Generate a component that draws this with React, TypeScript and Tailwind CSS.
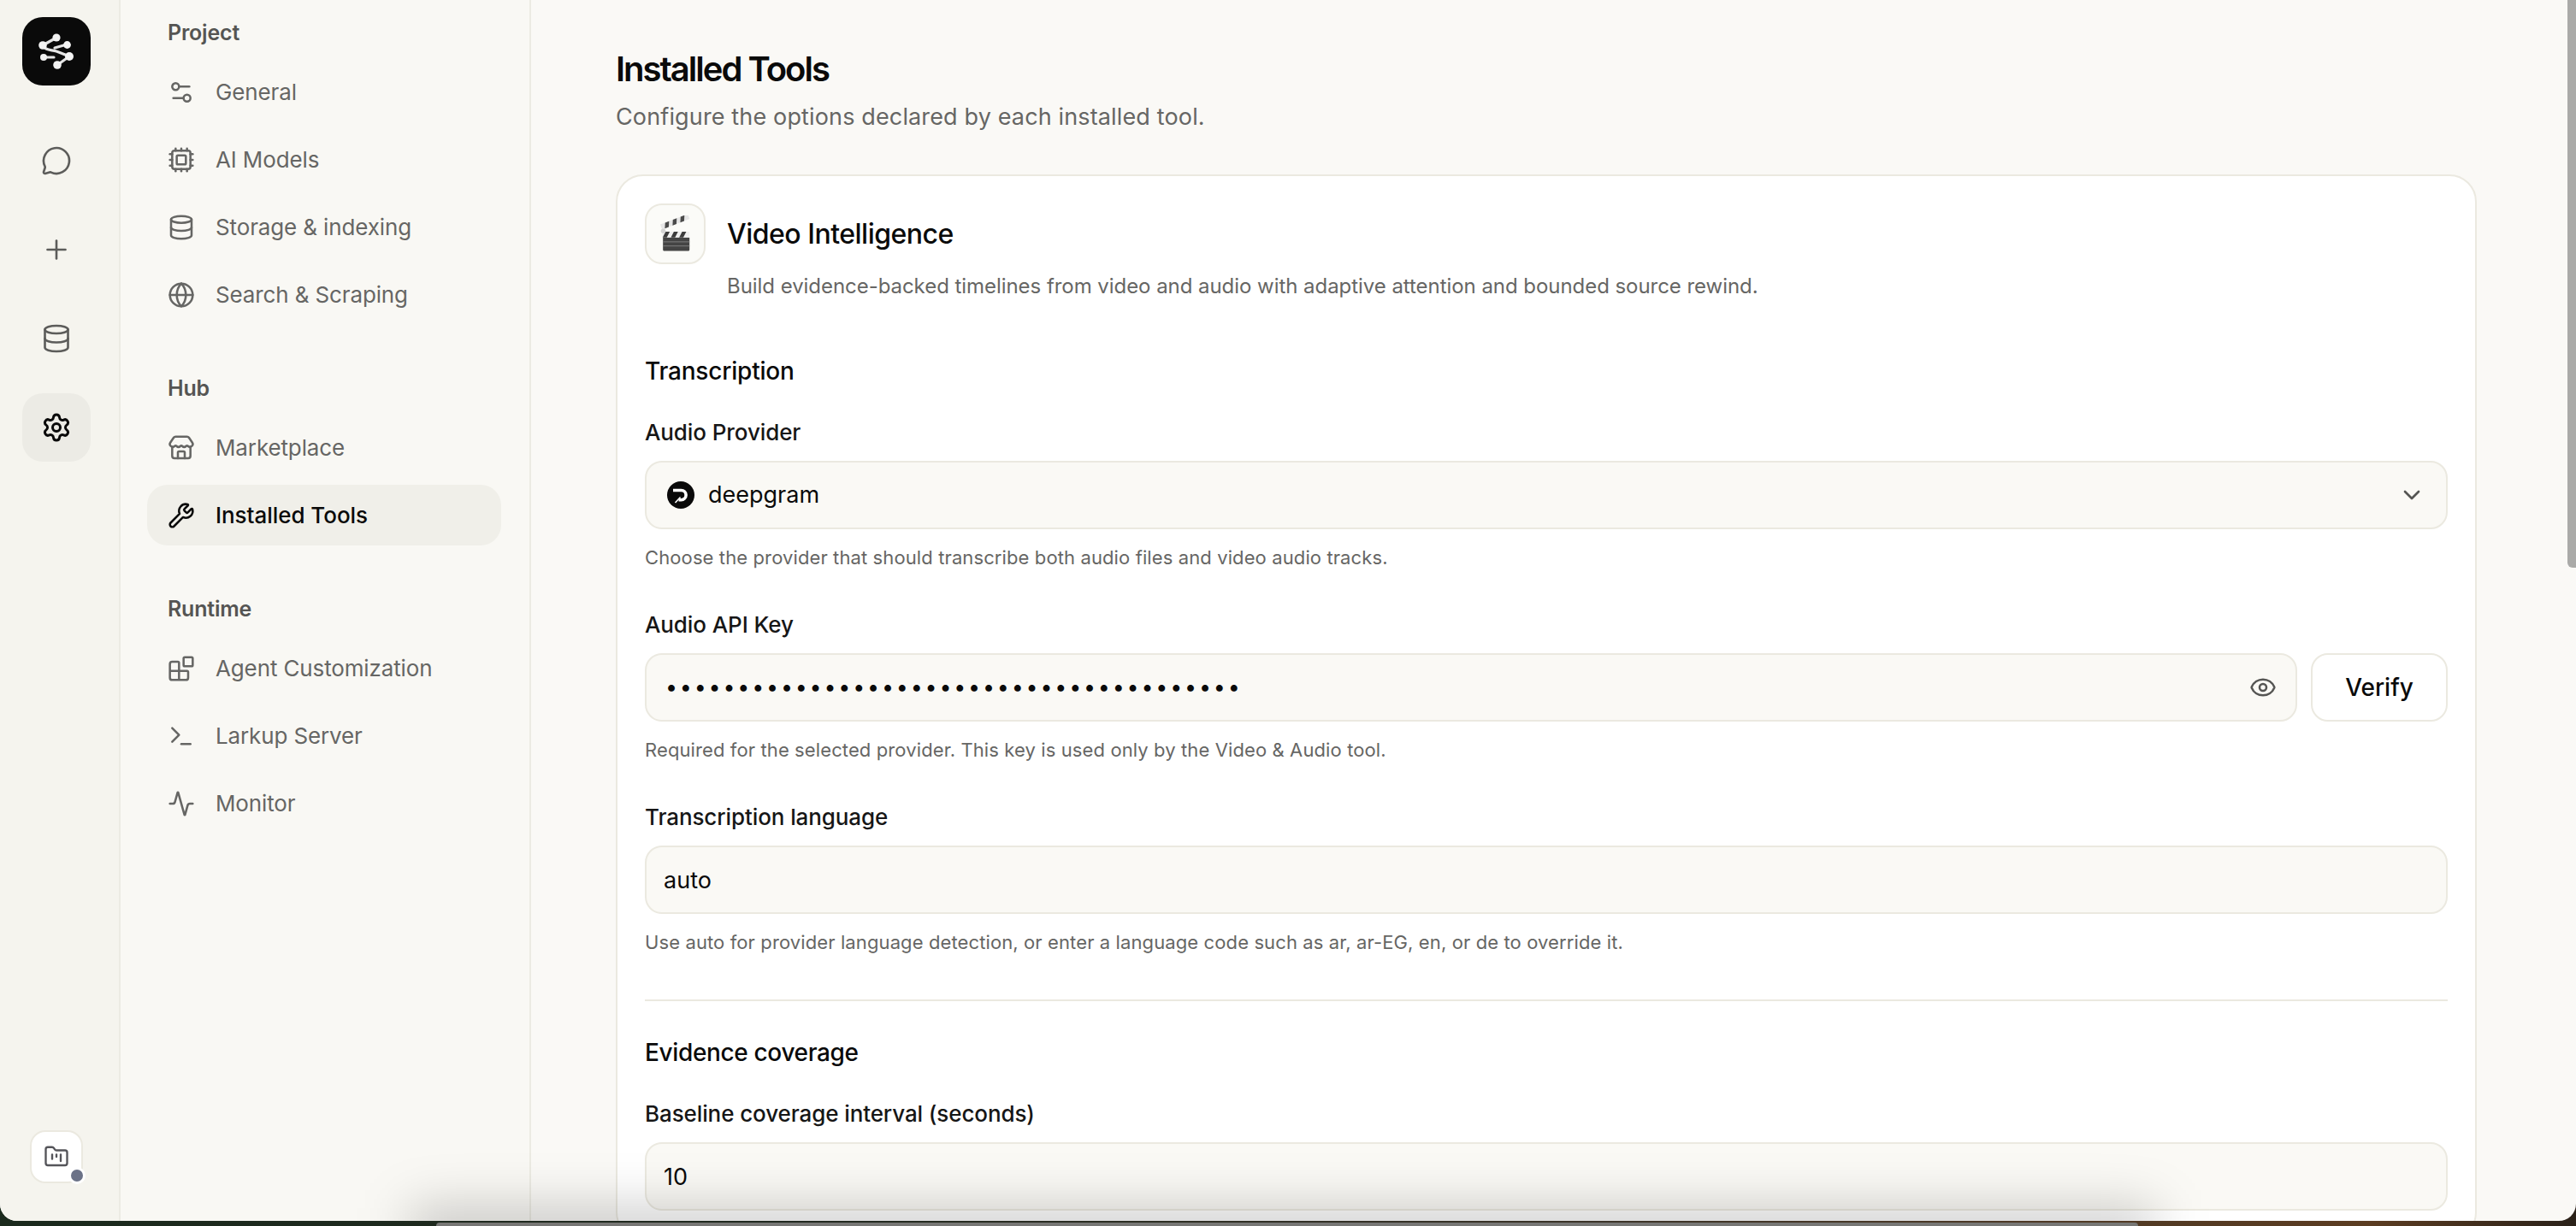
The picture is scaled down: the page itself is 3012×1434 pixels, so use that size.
import { Activity, Blocks, ChevronDown, Cpu, Database, Eye, FolderKanban, Globe, MessageCircle, Plus, Settings, Settings2, Store, Terminal, Wrench } from "lucide-react";
import type { ComponentType, ReactNode } from "react";

type NavEntry = { label: string; icon: ComponentType<{ size?: number; strokeWidth?: number }>; active?: boolean };

const sections: { title: string; items: NavEntry[] }[] = [
  {
    title: "Project",
    items: [
      { label: "General", icon: Settings2 },
      { label: "AI Models", icon: Cpu },
      { label: "Storage & indexing", icon: Database },
      { label: "Search & Scraping", icon: Globe },
    ],
  },
  {
    title: "Hub",
    items: [
      { label: "Marketplace", icon: Store },
      { label: "Installed Tools", icon: Wrench, active: true },
    ],
  },
  {
    title: "Runtime",
    items: [
      { label: "Agent Customization", icon: Blocks },
      { label: "Larkup Server", icon: Terminal },
      { label: "Monitor", icon: Activity },
    ],
  },
];

const LogoMark = () => (
  <svg width="80" height="80" viewBox="0 0 80 80" fill="none">
    <g stroke="#e4e4e4" strokeWidth="3.2" strokeLinecap="round" strokeLinejoin="round">
      <path d="M40 24 L24 33 C27 39 33 38 40 40 C46 42 50 44 55 46 L41 56" />
      <path d="M52 32 L38 36" />
      <path d="M25 47 L37 47" />
    </g>
    <g fill="#f3f3f3">
      <circle cx="40" cy="24" r="4.6" />
      <circle cx="24" cy="33" r="4.8" />
      <circle cx="52.5" cy="32.5" r="4.4" />
      <circle cx="25" cy="47" r="4" />
      <circle cx="55" cy="46" r="5" />
      <circle cx="41" cy="56" r="4.8" />
    </g>
  </svg>
);

const ClapperIcon = () => (
  <svg width="40" height="44" viewBox="60 50 116 127.6">
    <rect x="75" y="124" width="90" height="46" rx="3" fill="#444444" />
    <rect x="75" y="138" width="90" height="3" fill="#7d7d7d" />
    <rect x="75" y="152" width="90" height="3" fill="#7d7d7d" />
    <rect x="73" y="105" width="92" height="20" fill="#efefef" />
    <path d="M84 105h14l-10 20H74zM112 105h14l-10 20h-14zM140 105h14l-10 20h-14z" fill="#3c3c3c" />
    <g transform="rotate(-21 70 92)">
      <rect x="70" y="80" width="100" height="18" fill="#e6e6e6" />
      <path d="M88 80h14l-8 18H80zM116 80h14l-8 18h-14zM144 80h14l-8 18h-14z" fill="#4a4a4a" />
    </g>
    <circle cx="76" cy="103" r="8" fill="#d4d4d4" />
  </svg>
);

const DeepgramIcon = () => (
  <svg width="32" height="32" viewBox="0 0 32 32" fill="none">
    <circle cx="16" cy="16" r="16" fill="#0a0a0a" />
    <path d="M7 10.5H16.5A5.6 5.6 0 0 1 16.5 21.7H13.5" stroke="#fff" strokeWidth="3.6" />
    <path d="M15.5 18.5L9.5 25" stroke="#fff" strokeWidth="1.6" />
  </svg>
);

const IconRail = () => (
  <aside className="flex h-full w-[141px] shrink-0 flex-col items-center border-r-2 border-[#ecebe3] bg-[#f5f4ee] pt-[20px] pr-[7px] pb-[44px]">
    <div className="flex h-[80px] w-[80px] items-center justify-center rounded-[24px] bg-[#0a0a0a]">
      <LogoMark />
    </div>
    <div className="mt-[48px] flex flex-col gap-[24px]">
      <div className="flex h-[80px] w-[80px] items-center justify-center text-[#5c5c5a]"><MessageCircle size={36} strokeWidth={1.75} /></div>
      <div className="flex h-[80px] w-[80px] items-center justify-center text-[#5c5c5a]"><Plus size={36} strokeWidth={1.75} /></div>
      <div className="flex h-[80px] w-[80px] items-center justify-center text-[#5c5c5a]"><Database size={36} strokeWidth={1.75} /></div>
      <div className="flex h-[80px] w-[80px] items-center justify-center rounded-[24px] bg-[#ecebe5] text-[#0a0a0a]"><Settings size={36} strokeWidth={2} /></div>
    </div>
    <div className="relative mt-auto flex h-[62px] w-[62px] items-center justify-center rounded-[18px] border-2 border-[#ebe9e0] bg-white text-[#55555a]">
      <FolderKanban size={30} strokeWidth={1.9} />
      <span className="absolute right-[-5px] bottom-[-3px] h-[20px] w-[20px] rounded-full border-[3px] border-white bg-[#6b7287]" />
    </div>
  </aside>
);

const SettingsNav = () => (
  <nav className="flex h-full w-[480px] shrink-0 flex-col gap-[54px] border-r-2 border-[#ecebe3] bg-[#f9f8f4] pt-[18px] pr-[33px] pl-[31px]">
    {sections.map((section) => (
      <div key={section.title}>
        <div className="mb-[14px] flex h-[40px] items-center pt-[2px] pl-[24px] text-[25px] font-semibold tracking-[-0.2px] text-[#555553]">{section.title}</div>
        <div className="flex flex-col gap-[8px]">
          {section.items.map((item) => (
            <div
              key={item.label}
              className={
                item.active
                  ? "flex h-[71px] items-center gap-[24px] rounded-[24px] bg-[#f0efe9] pl-[24px] text-[26px] font-medium tracking-[-0.05px] text-[#0a0a0a]"
                  : "flex h-[71px] items-center gap-[24px] rounded-[24px] pl-[24px] text-[26px] tracking-[-0.13px] text-[#666664]"
              }
            >
              <item.icon size={32} strokeWidth={1.9} />
              <span>{item.label}</span>
            </div>
          ))}
        </div>
      </div>
    ))}
  </nav>
);

const Field = ({ label, hint, children }: { label: string; hint?: string; children: ReactNode }) => (
  <div>
    <div className="mb-[14px] flex h-[40px] items-center text-[26px] font-medium tracking-[-0.1px] text-[#161616]">{label}</div>
    {children}
    {hint && <p className="mt-[17px] h-[33px] text-[22px] leading-[32px] tracking-[0.11px] text-[#666664]">{hint}</p>}
  </div>
);

const inputBox = "flex h-[80px] items-center rounded-[20px] border-2 border-[#ebe9e0] bg-[#faf9f5] text-[27px] text-[#0a0a0a]";

const ToolCard = () => (
  <section className="rounded-[32px] border-2 border-[#ebe9e0] bg-white p-[32px]">
    <div className="flex gap-[25px]">
      <div className="flex h-[71px] w-[71px] shrink-0 items-center justify-center rounded-[20px] border-2 border-[#ebe9e0] bg-[#fbfbf8]">
        <ClapperIcon />
      </div>
      <h2 className="flex h-[71px] items-center pt-[1px] text-[32px] font-medium tracking-[-0.5px] text-[#0a0a0a]">Video Intelligence</h2>
    </div>
    <p className="mt-[8px] pl-[96px] text-[24px] leading-[36px] tracking-[-0.05px] text-[#666664]">
      Build evidence-backed timelines from video and audio with adaptive attention and bounded source rewind.
    </p>

    <h3 className="mt-[61px] mb-[31px] h-[40px] text-[28px] leading-[40px] font-medium tracking-[-0.2px] text-[#0a0a0a]">Transcription</h3>
    <div className="flex flex-col gap-[41px]">
      <Field label="Audio Provider" hint="Choose the provider that should transcribe both audio files and video audio tracks.">
        <div className={`${inputBox} justify-between pr-[24px] pl-[24px]`}>
          <div className="flex items-center gap-[16px]">
            <DeepgramIcon />
            <span>deepgram</span>
          </div>
          <ChevronDown size={32} strokeWidth={2} className="text-[#555553]" />
        </div>
      </Field>
      <Field label="Audio API Key" hint="Required for the selected provider. This key is used only by the Video & Audio tool.">
        <div className="flex gap-[16px]">
          <div className={`${inputBox} flex-1 justify-between pr-[22px] pl-[22px]`}>
            <span className="text-[25px] tracking-[2.8px]">{"•".repeat(40)}</span>
            <Eye size={32} strokeWidth={1.9} className="text-[#555553]" />
          </div>
          <button className="h-[80px] w-[160px] rounded-[20px] border-2 border-[#ebe9e0] bg-white text-[28px] font-medium text-[#0a0a0a]">Verify</button>
        </div>
      </Field>
      <Field label="Transcription language" hint="Use auto for provider language detection, or enter a language code such as ar, ar-EG, en, or de to override it.">
        <div className={`${inputBox} pt-[2px] pl-[20px]`}>auto</div>
      </Field>
    </div>

    <div className="mt-[50px] h-[2px] bg-[#ebe9e0]" />
    <h3 className="mt-[40px] mb-[31px] h-[40px] text-[28px] leading-[40px] font-medium tracking-[-0.35px] text-[#0a0a0a]">Evidence coverage</h3>
    <Field label="Baseline coverage interval (seconds)">
      <div className={`${inputBox} pt-[2px] pl-[20px]`}>10</div>
    </Field>
  </section>
);

export default function App() {
  return (
    <div className="relative h-[1434px] w-[3012px] overflow-hidden bg-[linear-gradient(90deg,#1b2a1d_0%,#20291f_30%,#3b3429_62%,#5c3d22_92%,#2a2119_100%)] font-['Inter',sans-serif]">
      <div className="relative flex h-[1428px] overflow-hidden rounded-b-[20px] bg-[#faf9f6]">
        <IconRail />
        <SettingsNav />
        <main className="min-w-0 flex-1 pr-[116px] pl-[99px]">
          <h1 className="mt-[53px] h-[56px] text-[40px] leading-[56px] font-semibold tracking-[-2px] text-[#0a0a0a]">Installed Tools</h1>
          <p className="mt-[8px] h-[40px] text-[27px] leading-[40px] tracking-[0.14px] text-[#666664]">Configure the options declared by each installed tool.</p>
          <div className="mt-[47px]">
            <ToolCard />
          </div>
        </main>
        <div className="absolute top-0 right-0 h-[664px] w-[10px] rounded-bl-[6px] bg-[#aaaaa8]" />
        <div className="absolute bottom-[-44px] left-[480px] h-[60px] w-[2040px] bg-black/20 blur-[30px]" />
      </div>
      <div className="absolute top-[1430px] left-[510px] h-[4px] w-[1990px] rounded-t-[8px] bg-[#777775]" />
    </div>
  );
}
